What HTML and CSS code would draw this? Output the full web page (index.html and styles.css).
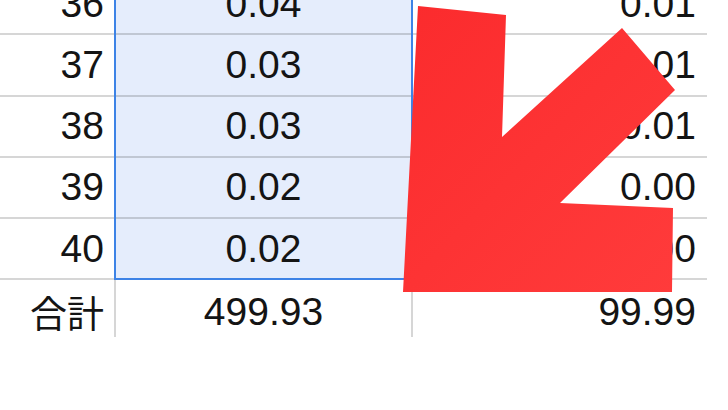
FILE: index.html
```html
<!doctype html>
<html lang="ja">
  <head>
    <meta charset="utf-8">
    <meta name="viewport" content="width=device-width, initial-scale=1">
    <title>合計</title>
    <link rel="stylesheet" href="styles.css">
  </head>
  <body>
    <div class="page">
      <!-- visible part of the sheet, cut off below the total row -->
      <div class="clip">
        <div class="sheet">
          <div class="row">
            <div class="cell num">36</div>
            <div class="cell val sel">0.04</div>
            <div class="cell pct">0.01</div>
          </div>
          <div class="row">
            <div class="cell num">37</div>
            <div class="cell val sel">0.03</div>
            <div class="cell pct">0.01</div>
          </div>
          <div class="row">
            <div class="cell num">38</div>
            <div class="cell val sel">0.03</div>
            <div class="cell pct">0.01</div>
          </div>
          <div class="row">
            <div class="cell num">39</div>
            <div class="cell val sel">0.02</div>
            <div class="cell pct">0.00</div>
          </div>
          <div class="row">
            <div class="cell num">40</div>
            <div class="cell val sel">0.02</div>
            <div class="cell pct">0.00</div>
          </div>
          <div class="row total">
            <div class="cell num">合計</div>
            <div class="cell val">499.93</div>
            <div class="cell pct">99.99</div>
          </div>

          <div class="selection"></div>
        </div>
      </div>

      <svg class="arrow" viewBox="0 0 728 410" aria-hidden="true">
        <defs>
          <linearGradient id="arrow-fill" x1="0" y1="0" x2="1" y2="1">
            <stop offset="0" stop-color="#fb2b2d"/>
            <stop offset="1" stop-color="#ff3b3b"/>
          </linearGradient>
        </defs>
        <polygon fill="url(#arrow-fill)"
          points="418,6 506,15 502,137 622,28 675,90 560,203 673,208 672,292 403,292"/>
      </svg>
    </div>
  </body>
</html>
```

FILE: styles.css
```css
html {
  --grid-line: rgba(0, 0, 0, 0.16);
  --sel-fill: #e5edfc;
  --sel-border: #3d83e6;
  --text-color: #141414;
}

body {
  margin: 0;
  background-color: #ffffff;
  color: var(--text-color);
  font-family: "Liberation Sans", Arial, "Noto Sans CJK JP", sans-serif;
}

.page {
  position: relative;
  width: 728px;
  height: 410px;
  overflow: hidden;
}

.clip {
  height: 337px;
  overflow: hidden;
}

.sheet {
  position: relative;
  width: 707px;
  margin-top: -26px;
}

.row {
  display: grid;
  grid-template-columns: 116px 297px 294px;
  height: 61.25px;
}

.cell {
  display: flex;
  align-items: center;
  box-sizing: border-box;
  border-bottom: 2px solid var(--grid-line);
  font-size: 39px;
  white-space: nowrap;
}

.num {
  justify-content: flex-end;
  padding-right: 10px;
  border-right: 2px solid var(--grid-line);
}

.val {
  justify-content: center;
  border-right: 2px solid var(--grid-line);
}

.pct {
  justify-content: flex-end;
  padding-right: 11px;
}

.sel {
  background-color: var(--sel-fill);
}

.total .cell {
  border-bottom: none;
  padding-top: 2px;
}

.total .num {
  font-family: "Noto Sans CJK JP", "Liberation Sans", sans-serif;
  font-size: 37px;
}

/* blue outline of the selected range, drawn over the cells */
.selection {
  position: absolute;
  top: 0;
  left: 114px;
  width: 299px;
  height: 306px;
  box-sizing: border-box;
  border: 2px solid var(--sel-border);
  border-top: none;
}

.arrow {
  position: absolute;
  top: 0;
  left: 0;
  width: 728px;
  height: 410px;
}
```
